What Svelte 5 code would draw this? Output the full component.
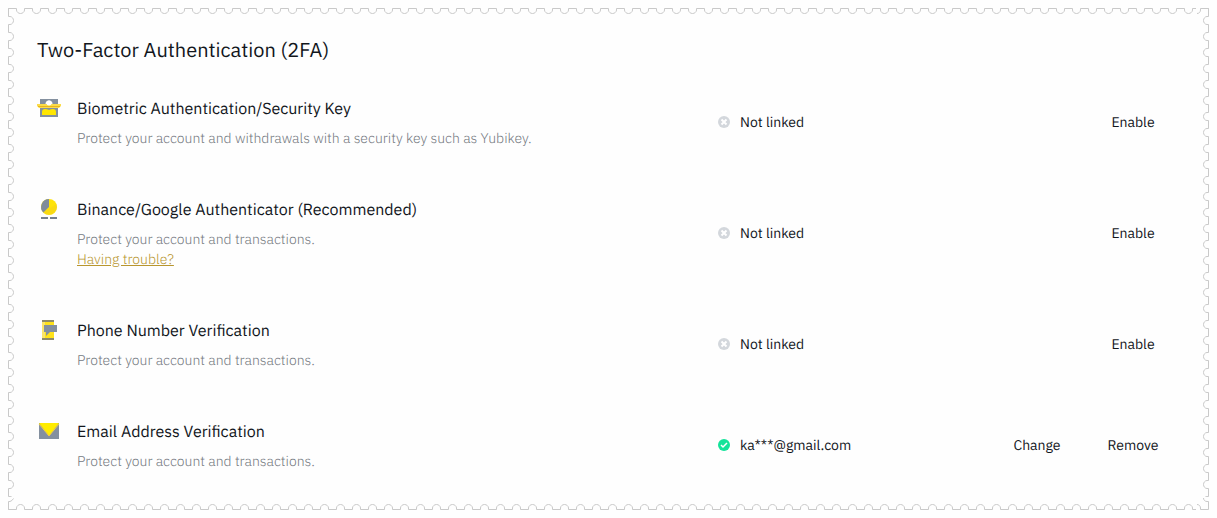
<script>
  const methods = [
    {
      id: 'key',
      title: 'Biometric Authentication/Security Key',
      text: 'Protect your account and withdrawals with a security key such as Yubikey.',
      status: 'Not linked',
      linked: false,
      actions: ['Enable']
    },
    {
      id: 'authenticator',
      title: 'Binance/Google Authenticator (Recommended)',
      text: 'Protect your account and transactions.',
      help: 'Having trouble?',
      status: 'Not linked',
      linked: false,
      actions: ['Enable']
    },
    {
      id: 'phone',
      title: 'Phone Number Verification',
      text: 'Protect your account and transactions.',
      status: 'Not linked',
      linked: false,
      actions: ['Enable']
    },
    {
      id: 'email',
      title: 'Email Address Verification',
      text: 'Protect your account and transactions.',
      status: 'ka***@gmail.com',
      linked: true,
      actions: ['Change', 'Remove']
    }
  ];
</script>

<section class="card" aria-labelledby="heading">
  <svg class="edge" aria-hidden="true">
    <defs>
      <pattern id="top" x="4" y="0" width="16" height="6" patternUnits="userSpaceOnUse">
        <path d="M0 .5H4.5V2C4.5 4 6.5 5.5 8.5 5.5S12.5 4 12.5 2V.5H16" />
      </pattern>
      <pattern id="left" x="0" y="4" width="6" height="16" patternUnits="userSpaceOnUse">
        <path d="M.5 0V4.5H2C4 4.5 5.5 6.5 5.5 8.5S4 12.5 2 12.5H.5V16" />
      </pattern>
      <pattern id="bottom" x="4" y="-6" width="16" height="6" patternUnits="userSpaceOnUse">
        <path d="M0 5.5H4.5V4C4.5 2 6.5 .5 8.5 .5S12.5 2 12.5 4V5.5H16" />
      </pattern>
      <pattern id="right" x="-6" y="4" width="6" height="16" patternUnits="userSpaceOnUse">
        <path d="M5.5 0V4.5H4C2 4.5 .5 6.5 .5 8.5S2 12.5 4 12.5H5.5V16" />
      </pattern>
    </defs>
    <rect class="top" height="6" fill="url(#top)" />
    <rect class="left" width="6" fill="url(#left)" />
    <svg y="100%" width="100%" height="100%" overflow="visible">
      <rect class="top" y="-6" height="6" fill="url(#bottom)" />
      <path d="M8 -.5H.5V-8.5H2Q4 -9 5.500 -11.500" />
    </svg>
    <svg x="100%" width="100%" height="100%" overflow="visible">
      <rect class="left" x="-6" width="6" fill="url(#right)" />
      <path d="M-12 5.500C-10 5.500 -8.500 4 -8.500 2V.5H-.5V8" />
    </svg>
    <svg x="100%" y="100%" overflow="visible">
      <path d="M-12 -5.500C-10 -5.500 -8.500 -4 -8.500 -2V-.5H-.5V-8.500H-2C-4 -8.500 -5.500 -10 -5.500 -12" />
    </svg>
  </svg>

  <h2 id="heading">Two-Factor Authentication (2FA)</h2>

  <ul>
    {#each methods as method (method.id)}
      <li>
        <div class="method">
          <svg class="icon" viewBox="0 0 24 24" aria-hidden="true">
            {#if method.id === 'key'}
              <path fill="#84909f" d="M3 3h18v18H3z" />
              <circle cx="12" cy="8" r="3.500" fill="#fff" />
              <path fill="#fbdc4a" d="M0 8h24v2l-2 2H2l-2-2z" />
              <path fill="#e9b51c" d="M1 10h22v1H1z" />
              <circle cx="12" cy="7" r="2.500" fill="#fff" />
              <path fill="#ffe600" d="M5 19v-3q0-3 3-3 2 0 4 1 2-1 4-1 3 0 3 3v3z" />
            {:else if method.id === 'authenticator'}
              <circle cx="12" cy="10" r="8" fill="#fee30a" />
              <path fill="#f5cf1e" d="M6.500 15.500L19.500 7A8 8 0 0 1 6.500 15.500z" opacity=".45" />
              <path fill="#7f8b9b" d="M12 2v8l-5.600 5.600A8 8 0 0 1 12 2z" />
              <path fill="#76808f" d="M4 20h7v2H4zM13 20h7v2h-7z" />
            {:else if method.id === 'phone'}
              <path fill="#ffe21a" d="M5 2h12v20H5z" />
              <path fill="#fbe56c" d="M5 4h3v16H5z" />
              <path fill="#8d8a6a" d="M5 2h12v2H5zM5 20h12v2H5z" />
              <path fill="#84909f" d="M7 7h13v7h-7l-4 4v-4H7z" />
            {:else}
              <path fill="#84909f" d="M2 4h20v16H2z" />
              <path fill="#ffec00" d="M2 4h20L12 17z" />
              <path fill="none" stroke="#eec94c" d="M2 5l10 12L22 5" />
            {/if}
          </svg>
          <div>
            <h3>{method.title}</h3>
            <p>{method.text}</p>
            {#if method.help}<a href="#help">{method.help}</a>{/if}
          </div>
        </div>

        <div class="status">
          <svg viewBox="0 0 12 12" aria-hidden="true">
            <circle cx="6" cy="6" r="6" fill={method.linked ? '#14e39a' : '#d3d7dc'} />
            {#if method.linked}
              <path class="mark" d="M3 6l2 2 4-4" />
            {:else}
              <path class="mark cross" d="M3.500 3.500l5 5M8.500 3.500l-5 5" />
            {/if}
          </svg>
          <span>{method.status}</span>
        </div>

        <div class="actions">
          {#each method.actions as action}
            <button type="button" aria-label="{action} {method.title}">{action}</button>
          {/each}
        </div>
      </li>
    {/each}
  </ul>
</section>

<style>
  :global(body) {
    background: #fefefe;
  }

  .card {
    position: relative;
    margin: 8px;
    padding: 28px 30px 14px 29px;
    color: #12161c;
    font-family: 'IBM Plex Sans', 'Noto Sans', sans-serif;
    font-size: 14px;
    line-height: 20px;
    text-rendering: geometricPrecision;
  }

  .edge {
    position: absolute;
    inset: 0;
    width: 100%;
    height: 100%;
    pointer-events: none;
  }

  .edge path {
    fill: none;
    stroke: #c9c9c9;
  }

  .edge .top {
    width: calc(100% - 13px);
  }

  .edge .left {
    height: calc(100% - 13px);
  }

  h2,
  h3,
  p,
  ul {
    margin: 0;
    padding: 0;
    font-weight: 400;
  }

  h2 {
    font-size: 20px;
    line-height: 28px;
  }

  ul {
    margin-top: 8px;
    list-style: none;
  }

  li {
    display: grid;
    grid-template-columns: minmax(0, 681fr) minmax(0, 269fr) 192px;
    align-items: center;
    padding: 24px 0 25px;
  }

  .method {
    display: flex;
    align-items: flex-start;
    gap: 16px;
  }

  .icon {
    flex: none;
    width: 24px;
    height: 24px;
  }

  h3 {
    margin-bottom: 6px;
    font-size: 16px;
    line-height: 26px;
  }

  p {
    color: #74797e;
    font-weight: 300;
  }

  a {
    display: block;
    width: max-content;
    color: #b8962e;
    font-weight: 300;
  }

  .status {
    display: flex;
    align-items: center;
    gap: 10px;
  }

  .status svg {
    flex: none;
    width: 12px;
    height: 12px;
  }

  .mark {
    fill: none;
    stroke: #fff;
    stroke-width: 1.5;
  }

  .cross {
    stroke-width: 2;
  }

  .actions {
    display: flex;
    justify-content: flex-end;
    gap: 4px;
  }

  button {
    width: 92px;
    padding: 0;
    border: 0;
    background: none;
    color: inherit;
    font: inherit;
    text-rendering: inherit;
    cursor: pointer;
  }
</style>
